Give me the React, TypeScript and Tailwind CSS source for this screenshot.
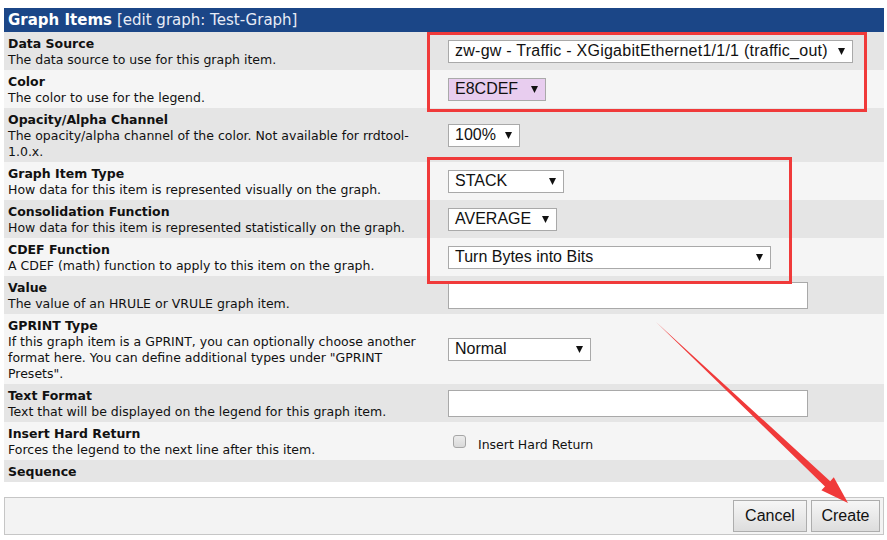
import React from 'react';

const Caret: React.FC = () => (
  <svg width="7" height="7" viewBox="0 0 7 7" className="shrink-0">
    <polygon points="0,0 7,0 3.5,7" fill="#111" />
  </svg>
);

interface SelectProps {
  text: string;
  width: string;
  bg?: string;
}

const FakeSelect: React.FC<SelectProps> = ({ text, width, bg = 'bg-white' }) => (
  <div
    className={`${width} ${bg} h-[23px] border border-[#a9a9a9] flex items-center justify-between pl-[6px] pr-[7px] font-['Liberation_Sans',Arial,sans-serif] text-[16px] text-[#111] whitespace-nowrap`}
  >
    <span>{text}</span>
    <Caret />
  </div>
);

const TextBox: React.FC = () => <div className="w-[360px] h-[27px] bg-white border border-[#a9a9a9]" />;

interface Row {
  label: string;
  desc: string[];
  control?: React.ReactNode;
}

const rows: Row[] = [
  {
    label: 'Data Source',
    desc: ['The data source to use for this graph item.'],
    control: (
      <FakeSelect text="zw-gw - Traffic - XGigabitEthernet1/1/1 (traffic_out)" width="w-[405px] tracking-[0.25px]" />
    ),
  },
  {
    label: 'Color',
    desc: ['The color to use for the legend.'],
    control: <FakeSelect text="E8CDEF" width="w-[98px]" bg="bg-[#e8cdef]" />,
  },
  {
    label: 'Opacity/Alpha Channel',
    desc: ['The opacity/alpha channel of the color. Not available for rrdtool-', '1.0.x.'],
    control: <FakeSelect text="100%" width="w-[72px]" />,
  },
  {
    label: 'Graph Item Type',
    desc: ['How data for this item is represented visually on the graph.'],
    control: <FakeSelect text="STACK" width="w-[116px]" />,
  },
  {
    label: 'Consolidation Function',
    desc: ['How data for this item is represented statistically on the graph.'],
    control: <FakeSelect text="AVERAGE" width="w-[109px]" />,
  },
  {
    label: 'CDEF Function',
    desc: ['A CDEF (math) function to apply to this item on the graph.'],
    control: <FakeSelect text="Turn Bytes into Bits" width="w-[323px]" />,
  },
  {
    label: 'Value',
    desc: ['The value of an HRULE or VRULE graph item.'],
    control: <TextBox />,
  },
  {
    label: 'GPRINT Type',
    desc: [
      'If this graph item is a GPRINT, you can optionally choose another',
      'format here. You can define additional types under "GPRINT',
      'Presets".',
    ],
    control: <FakeSelect text="Normal" width="w-[143px]" />,
  },
  {
    label: 'Text Format',
    desc: ['Text that will be displayed on the legend for this graph item.'],
    control: <TextBox />,
  },
  {
    label: 'Insert Hard Return',
    desc: ['Forces the legend to the next line after this item.'],
    control: (
      <div className="flex items-center pl-[5px]">
        <div className="w-[13px] h-[13px] rounded-[3px] border border-[#a6a6a6] bg-gradient-to-b from-[#ececec] to-[#d9d9d9]" />
        <span className="ml-[12px] mt-[7px] font-['DejaVu_Sans',Verdana,sans-serif] text-[12.5px] text-[#111]">
          Insert Hard Return
        </span>
      </div>
    ),
  },
  { label: 'Sequence', desc: [] },
];

export default function App() {
  return (
    <div className="relative w-[887px] h-[540px] bg-white overflow-hidden">
      <div className="w-[880px] ml-[4px] pt-[8px] font-['DejaVu_Sans',Verdana,sans-serif] text-[12.5px] leading-[16px] text-[#111]">
        {/* header */}
        <div className="h-[24px] bg-[#1b4687] flex items-center px-[4px] text-[15px] text-white">
          <span className="font-bold">Graph Items</span>
          <span className="ml-[5px] text-[#e8ecf6]">[edit graph: Test-Graph]</span>
        </div>

        {rows.map((r, i) => (
          <div key={r.label} className={`flex ${i % 2 === 0 ? 'bg-[#e5e5e5]' : 'bg-[#f5f5f5]'}`}>
            <div className="w-[440px] px-[4px] pt-[4px] pb-[2px]">
              <div className="font-bold">{r.label}</div>
              {r.desc.map((d) => (
                <div key={d} className="whitespace-nowrap">
                  {d}
                </div>
              ))}
            </div>
            <div className="flex-1 flex items-center px-[4px]">{r.control}</div>
          </div>
        ))}
      </div>

      {/* buttons */}
      <div className="w-[880px] ml-[4px] mt-[15px] h-[38px] border border-[#c6c6c6] bg-[#f3f3f3] flex items-center justify-end gap-[4px] pr-[3px]">
        <button className="h-[32px] w-[74px] border border-[#adadad] bg-gradient-to-b from-[#f6f6f6] to-[#dddddd] font-['Liberation_Sans',Arial,sans-serif] text-[16px] text-[#111]">
          Cancel
        </button>
        <button className="h-[32px] w-[69px] border border-[#adadad] bg-gradient-to-b from-[#f6f6f6] to-[#dddddd] font-['Liberation_Sans',Arial,sans-serif] text-[16px] text-[#111]">
          Create
        </button>
      </div>

      {/* annotations drawn over the page */}
      <svg className="absolute inset-0 pointer-events-none" width="887" height="540">
        <rect x="428.5" y="33.5" width="437" height="77" fill="none" stroke="#f03a3a" strokeWidth="3" />
        <rect x="428.5" y="158.5" width="362" height="124" fill="none" stroke="#f03a3a" strokeWidth="3" />
        <polygon
          points="656,322 830.2,481.2 833.8,477.3 848,503 821.4,490.3 825,486.4"
          fill="#f03a3a"
        />
      </svg>
    </div>
  );
}
